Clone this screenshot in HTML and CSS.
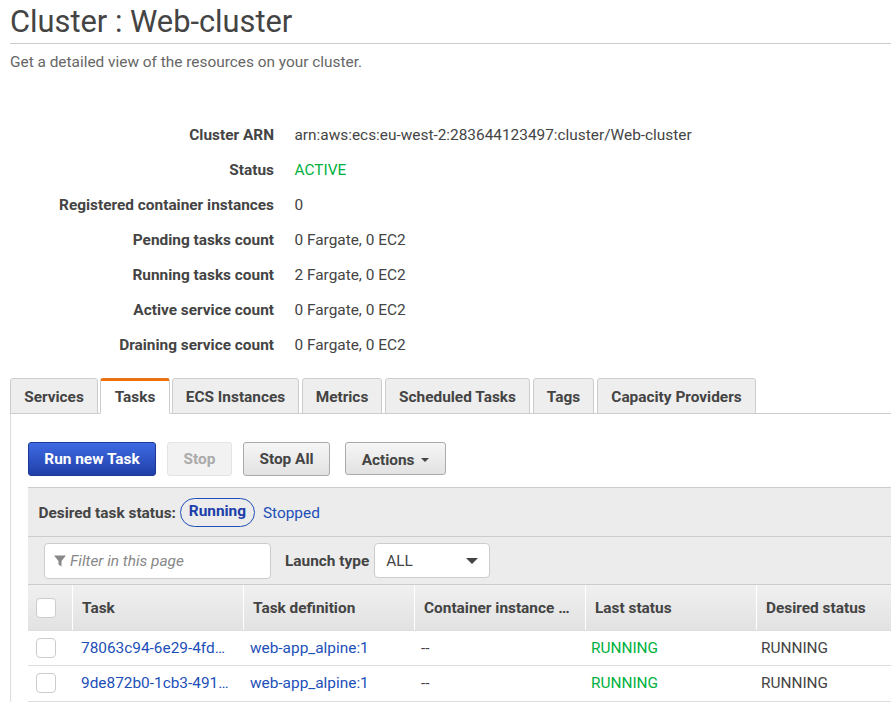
FILE: index.html
```html
<!DOCTYPE html>
<html>
<head>
	<title>Cluster : Web-cluster</title>
	<link rel="stylesheet" href="styles.css">
</head>
<body>
	<div class="page_head">
		<h1>Cluster : Web-cluster</h1>
		<p class="sub">Get a detailed view of the resources on your cluster.</p>
	</div>

	<div class="details">
		<div class="lbl">Cluster ARN</div><div>arn:aws:ecs:eu-west-2:283644123497:cluster/Web-cluster</div>
		<div class="lbl">Status</div><div class="green">ACTIVE</div>
		<div class="lbl">Registered container instances</div><div>0</div>
		<div class="lbl">Pending tasks count</div><div>0 Fargate, 0 EC2</div>
		<div class="lbl">Running tasks count</div><div>2 Fargate, 0 EC2</div>
		<div class="lbl">Active service count</div><div>0 Fargate, 0 EC2</div>
		<div class="lbl">Draining service count</div><div>0 Fargate, 0 EC2</div>
	</div>

	<div class="tabs">
		<div class="tab tab_services">Services</div>
		<div class="tab tab_tasks active">Tasks</div>
		<div class="tab tab_ecs">ECS Instances</div>
		<div class="tab tab_metrics">Metrics</div>
		<div class="tab tab_sched">Scheduled Tasks</div>
		<div class="tab tab_tags">Tags</div>
		<div class="tab tab_cap">Capacity Providers</div>
	</div>

	<div class="panel">
		<div class="actions">
			<button class="btn primary">Run new Task</button>
			<button class="btn disabled">Stop</button>
			<button class="btn stop_all">Stop All</button>
			<button class="btn menu">Actions <span class="caret"></span></button>
		</div>

		<div class="status_bar">
			<strong>Desired task status:</strong>
			<span class="pill">Running</span>
			<span class="link">Stopped</span>
		</div>

		<div class="filter_bar">
			<div class="filter">
				<svg width="12" height="12" viewBox="0 0 12 12"><path d="M0 0.5h12L7.5 6v5.5L4.5 9.5V6z" fill="#888"/></svg>
				<em>Filter in this page</em>
			</div>
			<strong class="launch">Launch type</strong>
			<div class="select">ALL <span class="select_caret"></span></div>
		</div>

		<div class="grid head">
			<div class="cell"><span class="check"></span></div>
			<div class="cell">Task</div>
			<div class="cell">Task definition</div>
			<div class="cell">Container instance …</div>
			<div class="cell">Last status</div>
			<div class="cell">Desired status</div>
		</div>
		<div class="grid row">
			<div class="cell"><span class="check"></span></div>
			<div class="cell link">78063c94-6e29-4fd…</div>
			<div class="cell link">web-app_alpine:1</div>
			<div class="cell">--</div>
			<div class="cell green">RUNNING</div>
			<div class="cell">RUNNING</div>
		</div>
		<div class="grid row">
			<div class="cell"><span class="check"></span></div>
			<div class="cell link">9de872b0-1cb3-491…</div>
			<div class="cell link">web-app_alpine:1</div>
			<div class="cell">--</div>
			<div class="cell green">RUNNING</div>
			<div class="cell">RUNNING</div>
		</div>
	</div>
</body>
</html>
```

FILE: styles.css
```css
html, body {
	margin: 0;
	height: 707px;
	overflow: hidden;
	background: #fff;
}
body {
	font-family: Roboto, "Liberation Sans", sans-serif;
	font-size: 15.4px;
	color: #444;
	padding-left: 10px;
}
strong {
	font-weight: 700;
}

.page_head h1 {
	margin: 0;
	height: 43px;
	line-height: 43px;
	font-size: 30.8px;
	font-weight: 400;
	color: #444;
	border-bottom: 1px solid #ccc;
}
.sub {
	margin: 0;
	padding-top: 10px;
	line-height: 17px;
	color: #666;
	height: 17px;
}

.details {
	display: grid;
	grid-template-columns: 264px auto;
	column-gap: 20.5px;
	grid-auto-rows: 35px;
	margin-top: 47px;
	line-height: 35px;
}
.lbl {
	text-align: right;
	font-weight: 700;
}
.green {
	color: #00b140;
}

.tabs {
	display: flex;
	margin-top: 15px;
	height: 35px;
	border-bottom: 1px solid #ccc;
}
.tab {
	box-sizing: border-box;
	height: 36px;
	line-height: 36px;
	text-align: center;
	font-weight: 700;
	background: #eee;
	border: 1px solid #ccc;
	border-radius: 3px 3px 0 0;
}
.tab_services { width: 88px; margin-right: 2px; }
.tab_tasks { width: 70px; margin-right: 2px; }
.tab_ecs { width: 127px; margin-right: 3px; }
.tab_metrics { width: 80px; margin-right: 3px; }
.tab_sched { width: 145px; margin-right: 3px; }
.tab_tags { width: 61px; margin-right: 3px; }
.tab_cap { width: 159px; }
.tab.active {
	background: #fff;
	border-top: 3px solid #ec7211;
	border-bottom-color: #fff;
	line-height: 32px;
}

.panel {
	border-left: 1px solid #ddd;
	padding: 28px 0 0 17px;
}

.actions {
	display: flex;
	align-items: flex-start;
	height: 45px;
}
.btn {
	box-sizing: border-box;
	height: 34px;
	font-family: inherit;
	font-size: 15.4px;
	font-weight: 700;
	color: #444;
	background: linear-gradient(#f6f6f6, #e2e2e2);
	border: 1px solid #aaa;
	border-radius: 3px;
	padding: 0;
}
.primary {
	width: 128px;
	color: #fff;
	background: linear-gradient(#3f6ae4, #1f3fa8);
	border-color: #1a3a94;
}
.disabled {
	width: 65px;
	margin-left: 11px;
	color: #aaa;
	background: #f2f2f2;
	border-color: #e4e4e4;
}
.stop_all {
	width: 87px;
	margin-left: 11px;
}
.menu {
	width: 101px;
	height: 33px;
	margin-left: 15px;
	padding-top: 2px;
}
.caret {
	display: inline-block;
	margin-left: 3px;
	vertical-align: 3px;
	border-top: 4px solid #444;
	border-left: 4.5px solid transparent;
	border-right: 4.5px solid transparent;
}

.status_bar {
	box-sizing: border-box;
	display: flex;
	align-items: center;
	height: 50px;
	padding-left: 10.5px;
	background: #ececec;
	border-top: 1px solid #ccc;
	border-bottom: 1px solid #ccc;
}
.status_bar strong,
.status_bar .link {
	margin-top: 2px;
}
.pill {
	box-sizing: border-box;
	width: 75px;
	height: 29px;
	line-height: 25px;
	margin-left: 4px;
	text-align: center;
	font-weight: 700;
	color: #1c3faa;
	border: 1px solid #1c4fb8;
	border-radius: 15px;
}
.link {
	color: #1c4fb8;
}
.status_bar .link {
	margin-left: 8px;
}

.filter_bar {
	box-sizing: border-box;
	display: flex;
	align-items: center;
	height: 48px;
	padding-left: 16px;
	background: #ececec;
	border-bottom: 1px solid #ccc;
}
.filter {
	box-sizing: border-box;
	display: flex;
	align-items: center;
	gap: 4px;
	width: 227px;
	height: 36px;
	padding-left: 9px;
	background: #fff;
	border: 1px solid #ccc;
	border-radius: 4px;
}
.filter em {
	color: #888;
}
.launch {
	margin-left: 14px;
}
.select {
	box-sizing: border-box;
	display: flex;
	align-items: center;
	justify-content: space-between;
	width: 116px;
	height: 35px;
	margin-left: 5px;
	padding: 0 11px 0 11px;
	background: #fff;
	border: 1px solid #ccc;
	border-radius: 4px;
}
.select_caret {
	border-top: 6px solid #444;
	border-left: 6px solid transparent;
	border-right: 6px solid transparent;
}

.grid {
	display: grid;
	grid-template-columns: 44px 171px 171px 171px 171px 1fr;
}
.cell {
	box-sizing: border-box;
	display: flex;
	align-items: center;
	white-space: nowrap;
	overflow: hidden;
}
.head {
	box-sizing: border-box;
	height: 46px;
	border-bottom: 1px solid #ddd;
	font-weight: 700;
	background: linear-gradient(#f0f0f0, #e2e2e2);
}
.head .cell {
	padding-left: 9px;
	border-left: 1px solid #fff;
}
.head .cell:first-child {
	padding-left: 8px;
	border-left: 0;
}
.row {
	box-sizing: border-box;
	height: 35px;
	border-bottom: 1px solid #ddd;
}
.row:last-child {
	height: 36px;
	padding-bottom: 2px;
}
.row .cell {
	padding-left: 7px;
}
.row .cell:first-child {
	padding-left: 8px;
}
.row .cell:nth-child(2) {
	padding-left: 9px;
}
.row .cell:nth-child(5) {
	padding-left: 6px;
}
.row .cell:nth-child(6) {
	padding-left: 5px;
}
.check {
	box-sizing: border-box;
	width: 20px;
	height: 20px;
	background: #fff;
	border: 1px solid #ccc;
	border-radius: 4px;
}
```
